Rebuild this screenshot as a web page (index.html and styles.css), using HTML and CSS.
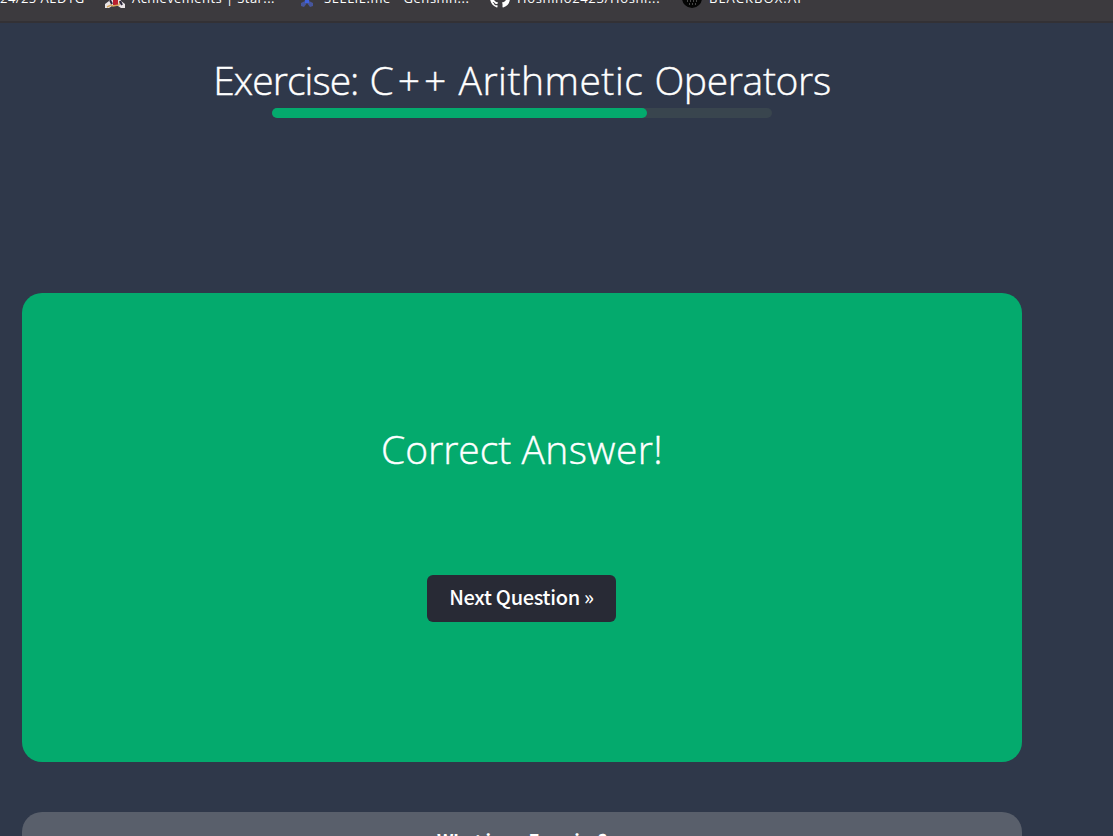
FILE: index.html
```html
<!DOCTYPE html>
<html lang="en">
<head>
<meta charset="utf-8">
<title>Exercise: C++ Arithmetic Operators</title>
<link rel="stylesheet" href="styles.css">
</head>
<body>
<nav class="bookmarks">
  <span class="bookmark b1"><span class="label">24/25 AED1G</span></span>
  <span class="bookmark b2">
    <svg class="icon" viewBox="0 0 20 20"><path d="M0 20v-4l4-3V9h12v4l4 3v4h-4l-3-2H7l-3 2z" fill="#e8e3e6"/><path d="M8 11h5v6H8z" fill="#b9202f"/><path d="M2 19l4-2 2 1 6-1 1-4" fill="none" stroke="#d5a55c" stroke-width="1.4"/><path d="M5 12l2 4M15 13l2 4" stroke="#29263b" stroke-width="2"/></svg>
    <span class="label">Achievements | Star...</span></span>
  <span class="bookmark b3">
    <svg class="icon" viewBox="0 0 20 20"><path d="M6 9h8l-2 4 4 2v3l-3 1-3-4-3 4-3-1v-3l4-2z" fill="#46559c"/><path d="M8 11h4v4H8z" fill="#3f62e0"/></svg>
    <span class="label">SEELIE.me - Genshin...</span></span>
  <span class="bookmark b4">
    <svg class="icon" viewBox="0 0 16 16"><path fill="#fff" d="M8 0C3.58 0 0 3.58 0 8c0 3.54 2.29 6.53 5.47 7.59.4.07.55-.17.55-.38 0-.19-.01-.82-.01-1.49-2.01.37-2.53-.49-2.69-.94-.09-.23-.48-.94-.82-1.13-.28-.15-.68-.52-.01-.53.63-.01 1.08.58 1.23.82.72 1.21 1.87.87 2.33.66.07-.52.28-.87.51-1.07-1.78-.2-3.64-.89-3.64-3.95 0-.87.31-1.59.82-2.15-.08-.2-.36-1.02.08-2.12 0 0 .67-.21 2.2.82a7.6 7.6 0 0 1 4 0c1.53-1.04 2.2-.82 2.2-.82.44 1.1.16 1.92.08 2.12.51.56.82 1.27.82 2.15 0 3.07-1.87 3.75-3.65 3.95.29.25.54.73.54 1.48 0 1.07-.01 1.93-.01 2.2 0 .21.15.46.55.38A8 8 0 0 0 16 8c0-4.42-3.58-8-8-8z"/></svg>
    <span class="label">Hoshino2423/Hoshi...</span></span>
  <span class="bookmark b5">
    <svg class="icon" viewBox="0 0 20 20"><circle cx="10" cy="10" r="10" fill="#050505"/><path d="M5 13h10M7 16h7" stroke="#8a8a8a" stroke-dasharray="1 2"/></svg>
    <span class="label">BLACKBOX.AI</span></span>
</nav>
<main class="page">
  <h1 class="title"><span class="tight">Exercise:</span> <span class="wide">C++</span> <span class="loose">Arithmetic</span> <span class="snug">Operators</span></h1>
  <div class="progress"><div class="progress-fill"></div></div>
  <section class="result">
    <h2 class="result-title">Correct <span class="loose">Answer!</span></h2>
    <button class="next">Next Question »</button>
  </section>
  <section class="about"><h3 class="about-title">What is an Exercise?</h3></section>
</main>
</body>
</html>
```
FILE: styles.css
```css
* { box-sizing: border-box; }
body {
  margin: 0;
  height: 836px;
  overflow: hidden;
  background: #2f384a;
  color: #fff;
  font-family: "Open Sans", sans-serif;
}
.bookmarks {
  display: flex;
  height: 23px;
  overflow: hidden;
  background: #3c3a3e;
  border-bottom: 2px solid #333135;
}
.bookmark {
  display: flex;
  flex: none;
  height: 20px;
  margin-top: -12px;
  gap: 7px;
  font-size: 13px;
  line-height: 20px;
  white-space: nowrap;
}
.b1 { width: 105px; letter-spacing: 0.45px; }
.b2 { width: 192px; letter-spacing: 0.43px; }
.b3 { width: 193px; letter-spacing: 0.55px; }
.b4 { width: 192px; letter-spacing: 0.65px; }
.b5 { letter-spacing: 1.1px; }
.icon { width: 20px; height: 20px; flex: none; }
.page { width: 1000px; margin-left: 22px; }
.title, .result-title {
  margin: 0;
  font-size: 39px;
  font-weight: 300;
  line-height: 54px;
  text-align: center;
  white-space: nowrap;
  -webkit-text-stroke: 0.4px #fff;
}
.title { height: 85px; padding-top: 30px; word-spacing: 1px; }
.tight { letter-spacing: -0.95px; }
.wide { letter-spacing: 4px; margin-right: -3px; }
.loose { letter-spacing: 0.5px; }
.snug { letter-spacing: -0.35px; }
.result-title .loose { letter-spacing: 0.4px; }
.progress {
  width: 500px;
  height: 10px;
  margin: 0 auto;
  border-radius: 5px;
  background: #39454e;
}
.progress-fill { width: 75%; height: 10px; border-radius: 5px; background: #04aa6d; }
.result {
  height: 469px;
  margin-top: 175px;
  padding-top: 129px;
  border-radius: 20px;
  background: #04aa6d;
  text-align: center;
}
.next {
  display: block;
  width: 189px;
  height: 47px;
  margin: 99px auto 0 405px;
  padding: 0 0 3px;
  border: 0;
  border-radius: 6px;
  background: #282a35;
  color: #fff;
  font: 500 20px/44px "Noto Sans CJK SC", sans-serif;
  letter-spacing: -0.3px;
}
.about {
  height: 24px;
  margin-top: 50px;
  padding-top: 13px;
  border-radius: 20px 20px 0 0;
  background: #595f6b;
  text-align: center;
}
.about-title { margin: 0; font: 700 18px/30px "Noto Sans CJK SC", sans-serif; letter-spacing: -0.3px; }
```
